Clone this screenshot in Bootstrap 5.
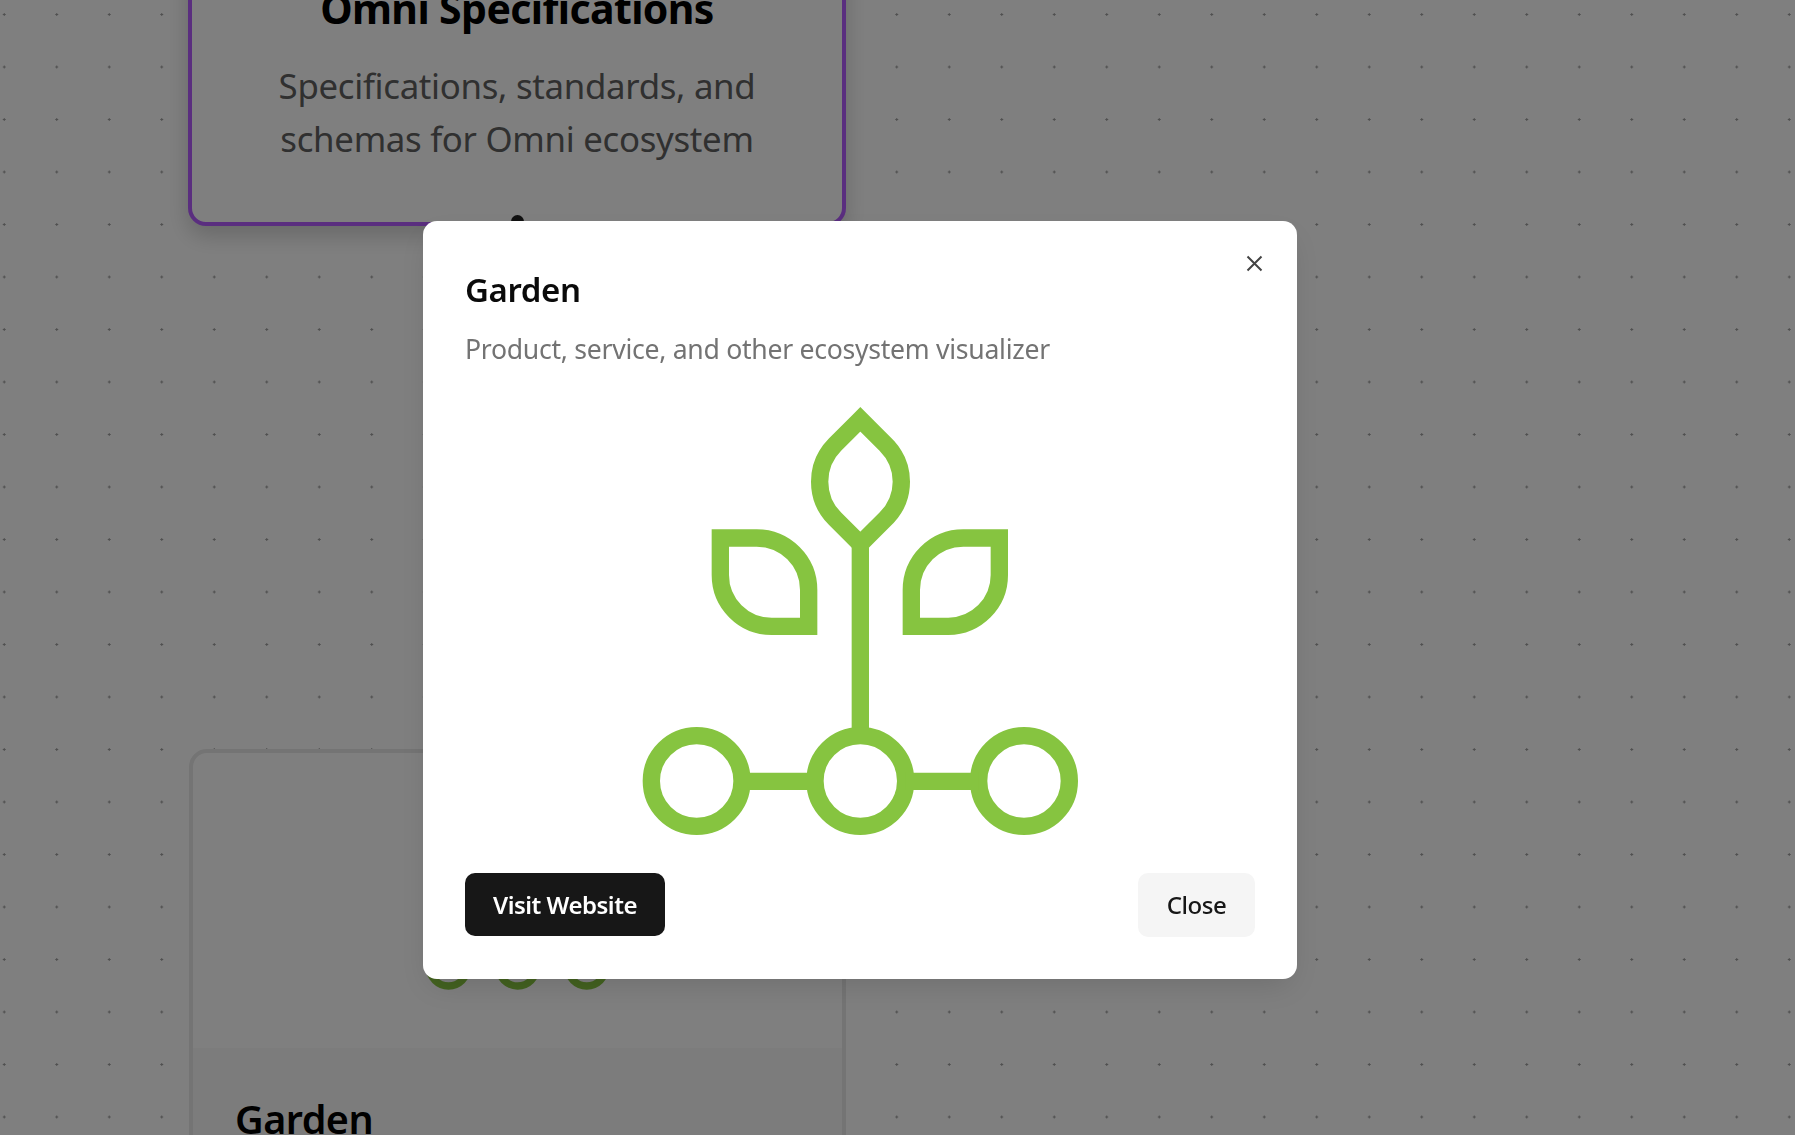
<!DOCTYPE html>
<html lang="en">
<head>
  <meta charset="UTF-8" />
  <title>Garden</title>
  <link href="https://cdn.jsdelivr.net/npm/bootstrap@5.3.0/dist/css/bootstrap.min.css" rel="stylesheet">
  <style>
    html, body { height: 100%; }
    body {
      overflow: hidden;
      font-family: "Noto Sans", "Open Sans", sans-serif;
      background-color: #fff;
      background-image: radial-gradient(circle, #a0a0a0 1.2px, transparent 1.4px);
      background-size: 52.5px 52.5px;
      background-position: -22px -11.75px;
    }

    .graph-canvas { position: relative; width: 100%; height: 100%; overflow: hidden; }

    .node-card {
      position: absolute;
      left: 188px;
      width: 658px;
      border-radius: 18px;
      background: #fff;
    }
    .node-spec {
      top: -100px;
      height: 326px;
      padding: 0 62px 57px;
      border: 4.5px solid #b45cff;
      box-shadow: 0 10px 22px rgba(0, 0, 0, .18);
    }
    .node-spec h3 { font-size: 41px; font-weight: 700; color: #000; line-height: 44px; letter-spacing: -.6px; margin: 0 0 29px; }
    .node-spec p { font-size: 34.8px; line-height: 53px; color: #606060; letter-spacing: -.3px; margin: 0; }
    .node-handle {
      position: absolute;
      left: 50%;
      bottom: -6px;
      width: 13px;
      height: 13px;
      margin-left: -6.5px;
      border-radius: 50%;
      background: #222;
    }

    .node-garden { left: 189px; width: 657px; top: 749px; height: 600px; border: 4px solid #e8e8e8; overflow: hidden; }
    .node-thumb { height: 295px; }
    .node-thumb svg { width: 203px; height: 190px; }
    .node-info { background: #f8f8f8; padding: 48px 42px; height: 100%; }
    .node-info h3 { font-size: 39.5px; font-weight: 600; color: #000; letter-spacing: -.5px; margin: 0; }

    .garden-dialog {
      position: absolute;
      left: 423px;
      top: 221px;
      width: 874px;
      z-index: 1060;
      background: #fff;
      border-radius: 14px;
      padding: 42px;
      box-shadow: 0 12px 30px -8px rgba(0, 0, 0, .14);
    }
    .dialog-x {
      position: absolute;
      top: 34px;
      right: 34px;
      width: 17px;
      height: 17px;
      padding: 0;
      border: 0;
      background: none;
      line-height: 0;
    }
    .dialog-title { font-size: 33px; font-weight: 600; line-height: 54px; color: #0a0a0a; letter-spacing: -.4px; margin: 0 0 14px; }
    .dialog-sub { font-size: 26.6px; line-height: 36px; color: #737373; letter-spacing: -.28px; margin: 0 0 33px; }
    .dialog-logo { width: 480px; height: 450px; display: block; margin: 0 auto; }
    .dialog-actions { margin-top: 23px; }
    .btn-visit, .btn-quiet { font-size: 24px; font-weight: 600; line-height: 36px; border: 0; letter-spacing: -.5px; }
    .btn-visit { background: #171717; color: #fff; width: 200px; height: 63px; border-radius: 10px; }
    .btn-quiet { background: #f5f5f5; color: #171717; font-weight: 500; width: 117px; height: 64px; border-radius: 10px; }
    .logo-stroke { fill: none; stroke: #86c440; stroke-width: 52; stroke-miterlimit: 10; }
  </style>
</head>
<body>
  <svg width="0" height="0" class="d-block position-absolute">
    <symbol id="garden-logo" viewBox="0 0 1440 1350">
      <g class="logo-stroke">
        <path d="M721 58 L645 134 C615 164 599 205 599 245 C599 285 615 326 645 356 L721 432 L797 356 C827 326 844 285 844 245 C844 205 827 164 797 134 Z" />
        <path d="M721 420 V990" />
        <path d="M301 414 H410 A156 156 0 0 1 566 570 V679 H455 A154 154 0 0 1 301 525 Z" />
        <path d="M1138 414 H1030 A156 156 0 0 0 874 570 V679 H985 A154 154 0 0 0 1138 525 Z" />
        <circle cx="230" cy="1143" r="136" />
        <circle cx="721" cy="1143" r="136" />
        <circle cx="1212" cy="1143" r="136" />
        <path d="M366 1144 H585 M857 1144 H1076" />
      </g>
    </symbol>
  </svg>

  <div class="graph-canvas">
    <div class="node-card node-spec text-center d-flex flex-column justify-content-end">
      <h3 class="text-nowrap">Omni Specifications</h3>
      <p>Specifications, standards, and schemas for Omni ecosystem</p>
      <span class="node-handle"></span>
    </div>

    <div class="node-card node-garden">
      <div class="node-thumb d-flex align-items-center justify-content-center">
        <svg><use href="#garden-logo" /></svg>
      </div>
      <div class="node-info">
        <h3>Garden</h3>
      </div>
    </div>
  </div>

  <div class="modal-backdrop show"></div>

  <div class="garden-dialog">
    <button class="dialog-x" type="button" aria-label="Close">
      <svg width="17" height="17" viewBox="0 0 17 17"><path d="M1.5 1.5 L15.5 15.5 M15.5 1.5 L1.5 15.5" stroke="#444" stroke-width="2" fill="none" /></svg>
    </button>
    <h2 class="dialog-title">Garden</h2>
    <p class="dialog-sub">Product, service, and other ecosystem visualizer</p>
    <svg class="dialog-logo"><use href="#garden-logo" /></svg>
    <div class="dialog-actions d-flex justify-content-between align-items-start">
      <button class="btn btn-visit" type="button">Visit Website</button>
      <button class="btn btn-quiet" type="button">Close</button>
    </div>
  </div>
</body>
</html>
